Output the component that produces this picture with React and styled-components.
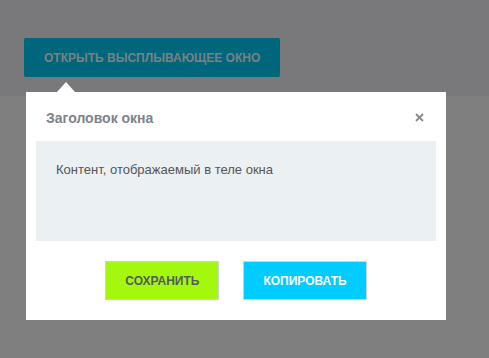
import React from 'react'
import styled, { createGlobalStyle } from 'styled-components'

const GlobalStyle = createGlobalStyle`
  html, body {
    margin: 0;
    padding: 0;
    background: #7f7f7f;
    font-family: "Liberation Sans", Arial, sans-serif;
  }
`

const Page = styled.div`
  width: 489px;
  height: 358px;
  background: #7f7f7f;
  overflow: hidden;
`

const Header = styled.div`
  height: 96px;
  box-sizing: border-box;
  padding: 38px 0 0 24px;
  background: #79797b;
`

const Anchor = styled.div`
  position: relative;
  display: inline-block;
`

const OpenButton = styled.button`
  height: 39px;
  padding: 0 20px;
  border: none;
  border-radius: 2px;
  background: #00667b;
  color: #7c8084;
  font-family: inherit;
  font-size: 12px;
  font-weight: 700;
  text-transform: uppercase;
  cursor: pointer;
`

const Popover = styled.div`
  position: absolute;
  top: calc(100% + 15px);
  left: 2px;
  width: 420px;
  background: #fff;
  box-sizing: border-box;
  padding: 0 10px 20px;

  &::before {
    content: '';
    position: absolute;
    top: -10px;
    left: 31px;
    border-left: 9px solid transparent;
    border-right: 9px solid transparent;
    border-bottom: 10px solid #fff;
  }
`

const PopHeader = styled.div`
  display: flex;
  align-items: center;
  justify-content: space-between;
  height: 49px;
  padding: 0 10px;
`

const Title = styled.h3`
  margin: 0;
  padding-top: 2px;
  font-size: 14px;
  font-weight: 700;
  color: #7d838b;
`

const Close = styled.button`
  border: none;
  background: none;
  padding: 0;
  width: 14px;
  height: 14px;
  display: flex;
  align-items: center;
  justify-content: center;
  cursor: pointer;
  margin-top: 2px;
`

const PopBody = styled.div`
  height: 100px;
  box-sizing: border-box;
  padding: 21px 20px;
  background: #ebf0f3;
  color: #555;
  font-size: 13px;
  line-height: 16px;
`

const Footer = styled.div`
  display: flex;
  justify-content: center;
  gap: 24px;
  padding-top: 20px;
`

const ActionButton = styled.button`
  height: 39px;
  padding: 0 19px;
  border: 1px solid #c9d3dc;
  background: ${(props) => (props.variant === 'save' ? '#a3f80d' : '#00ccff')};
  color: ${(props) => (props.variant === 'save' ? '#555a60' : '#fff')};
  font-family: inherit;
  font-size: 12px;
  font-weight: 700;
  text-transform: uppercase;
  cursor: pointer;
`

function App() {
  return (
    <Page>
      <GlobalStyle />
      <Header>
        <Anchor>
          <OpenButton>Открыть высплывающее окно</OpenButton>
          <Popover>
            <PopHeader>
              <Title>Заголовок окна</Title>
              <Close aria-label="Закрыть">
                <svg width="9" height="9" viewBox="0 0 9 9">
                  <path d="M1 1L8 8M8 1L1 8" stroke="#8a8a8a" strokeWidth="1.8" />
                </svg>
              </Close>
            </PopHeader>
            <PopBody>Контент, отображаемый в теле окна</PopBody>
            <Footer>
              <ActionButton variant="save">Сохранить</ActionButton>
              <ActionButton variant="copy">Копировать</ActionButton>
            </Footer>
          </Popover>
        </Anchor>
      </Header>
    </Page>
  )
}

export default App
